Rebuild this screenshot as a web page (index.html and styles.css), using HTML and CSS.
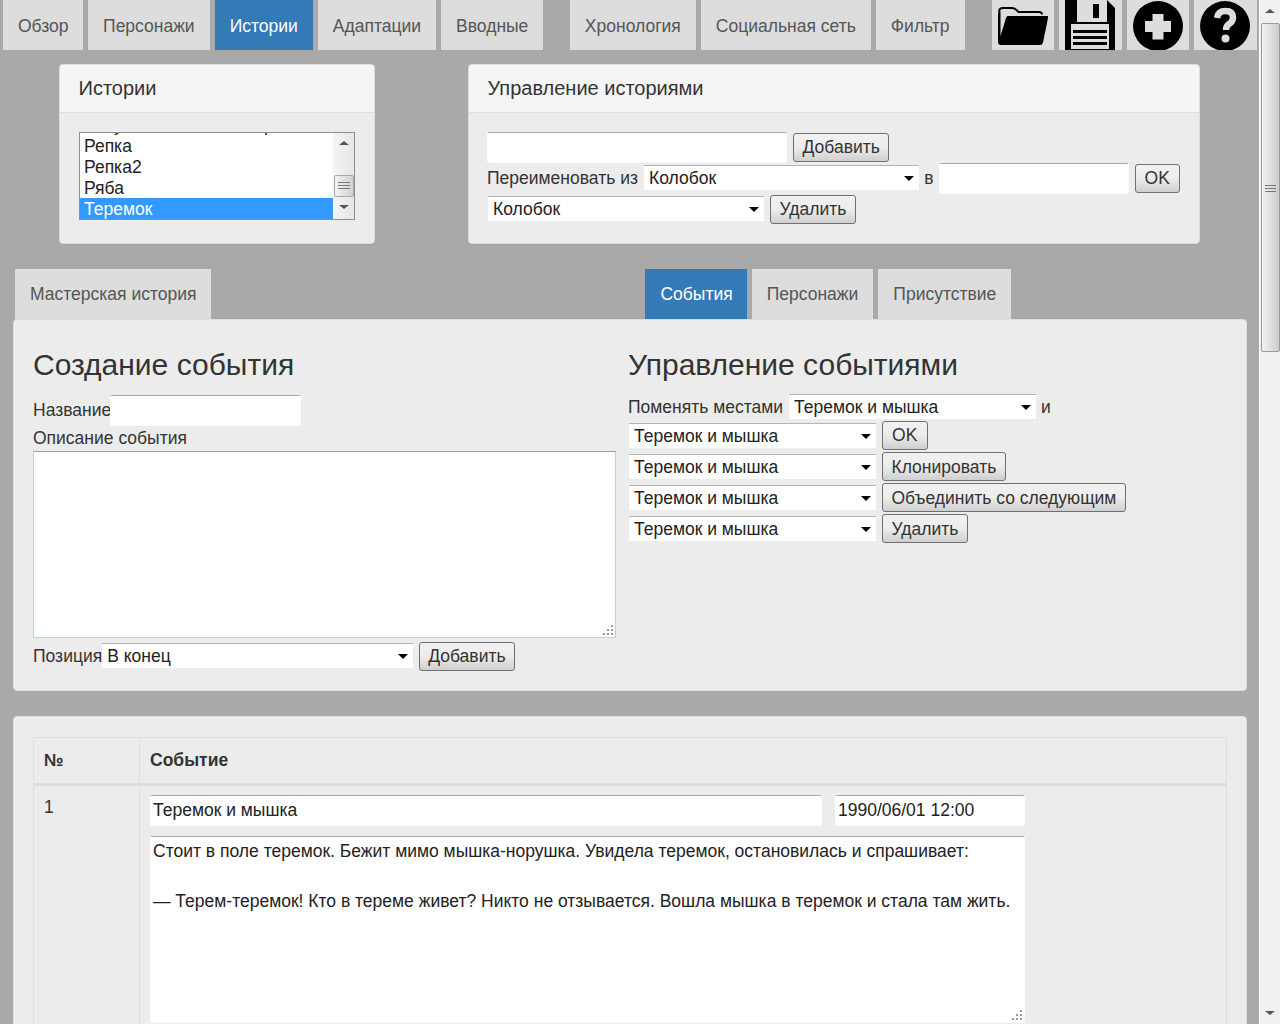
FILE: index.html
```html
<!DOCTYPE html>
<html lang="ru">
<head>
<meta charset="utf-8">
<title>Истории</title>
<link rel="stylesheet" href="styles.css">
</head>
<body>
<div class="page">
  <nav class="nav">
    <div class="tabs">
      <a class="tab tab-slim">Обзор</a><a class="tab">Персонажи</a><a class="tab active">Истории</a><a class="tab">Адаптации</a><a class="tab">Вводные</a>
    </div>
    <div class="tabs">
      <a class="tab">Хронология</a><a class="tab">Социальная сеть</a><a class="tab">Фильтр</a>
    </div>
    <div class="tabs icon-tabs">
      <a class="tab icon-tab">
        <svg width="50" height="50" viewBox="0 0 50 50"><path d="M1 12Q1 8 5 8H14Q17 8 19 10.500L20.500 12H41Q44 12 44 14.500" fill="none" stroke="#000" stroke-width="2"/><path d="M10 16H49.500Q50.500 16 50 18L45 42.500Q44.500 45 42 45H3Q0 45 0 42V13L2.500 11V36L8 18Q8.500 16 10 16Z" fill="#000"/></svg>
      </a>
      <a class="tab icon-tab">
        <svg width="50" height="50" viewBox="0 0 50 50"><path d="M0 0H42L50 8V50H0Z" fill="#000"/><path d="M12 0H42V22H12Z" fill="#ddd"/><path d="M28 4H34V18H28Z" fill="#000"/><path d="M6 24H44V49H6Z" fill="#ddd"/><path d="M8 30H42V33H8ZM8 36H42V39H8ZM8 42H42V45H8Z" fill="#000"/></svg>
      </a>
      <a class="tab icon-tab">
        <svg width="50" height="50" viewBox="0 0 50 50"><circle cx="25" cy="26" r="25" fill="#000"/><path d="M19.500 14H30.500V21H38V32H30.500V39.500H19.500V32H12V21H19.500Z" fill="#ddd"/></svg>
      </a>
      <a class="tab icon-tab">
        <svg width="50" height="50" viewBox="0 0 50 50"><circle cx="25" cy="26" r="25" fill="#000"/><path d="M17 18Q18 11 25.500 11Q33 11 33 17.500Q33 21.500 29 24Q26 26 26 30" fill="none" stroke="#ddd" stroke-width="6.500"/><circle cx="25.500" cy="38.500" r="4" fill="#ddd"/></svg>
      </a>
    </div>
  </nav>

  <section class="top-row">
    <div class="panel panel-list">
      <div class="panel-heading">Истории</div>
      <div class="panel-body">
        <div class="listbox">
          <div class="list-items">
            <div class="list-item">Петушок и бобовое зернышко</div>
            <div class="list-item">Репка</div>
            <div class="list-item">Репка2</div>
            <div class="list-item">Ряба</div>
            <div class="list-item selected">Теремок</div>
          </div>
          <div class="list-scroll">
            <span class="arrow-up"></span>
            <span class="list-thumb"></span>
            <span class="arrow-down"></span>
          </div>
        </div>
      </div>
    </div>
    <div class="panel panel-manage">
      <div class="panel-heading">Управление историями</div>
      <div class="panel-body">
        <div class="line">
          <input class="field w300" type="text">
          <button class="btn">Добавить</button>
        </div>
        <div class="line">
          <span>Переименовать из</span>
          <label class="select w276 raised"><select><option>Колобок</option></select></label>
          <span>в</span>
          <input class="field w190" type="text">
          <button class="btn btn-ok">OK</button>
        </div>
        <div class="line">
          <label class="select w276 raised"><select><option>Колобок</option></select></label>
          <button class="btn">Удалить</button>
        </div>
      </div>
    </div>
  </section>

  <div class="subnav">
    <div class="tabs"><a class="tab">Мастерская история</a></div>
    <div class="tabs">
      <a class="tab active tab-slim">События</a><a class="tab">Персонажи</a><a class="tab">Присутствие</a>
    </div>
  </div>

  <section class="card card-edit">
    <div class="col-left">
      <h3>Создание события</h3>
      <div class="line tight">
        <span class="name-label">Название</span>
        <input class="field w191" type="text">
      </div>
      <div class="desc-label">Описание события</div>
      <textarea class="area area-new"></textarea>
      <div class="line tight pos-line">
        <span>Позиция</span>
        <label class="select w311 raised"><select><option>В конец</option></select></label>
        <button class="btn">Добавить</button>
      </div>
    </div>
    <div class="col-right">
      <h3>Управление событиями</h3>
      <div class="line swap-line">
        <span>Поменять местами</span>
        <label class="select w247 raised"><select><option>Теремок и мышка</option></select></label>
        <span>и</span>
      </div>
      <div class="line">
        <label class="select w247"><select><option>Теремок и мышка</option></select></label>
        <button class="btn btn-ok">OK</button>
      </div>
      <div class="line">
        <label class="select w247"><select><option>Теремок и мышка</option></select></label>
        <button class="btn">Клонировать</button>
      </div>
      <div class="line">
        <label class="select w247"><select><option>Теремок и мышка</option></select></label>
        <button class="btn">Объединить со следующим</button>
      </div>
      <div class="line">
        <label class="select w247"><select><option>Теремок и мышка</option></select></label>
        <button class="btn">Удалить</button>
      </div>
    </div>
  </section>

  <section class="card card-table">
    <table class="events">
      <thead>
        <tr><th class="num">№</th><th>Событие</th></tr>
      </thead>
      <tbody>
        <tr>
          <td class="num">1</td>
          <td class="event-cell">
            <div class="event-head">
              <input class="field w672" type="text" value="Теремок и мышка">
              <input class="field w190" type="text" value="1990/06/01 12:00">
            </div>
            <textarea class="area area-event">Стоит в поле теремок. Бежит мимо мышка-норушка. Увидела теремок, остановилась и спрашивает:

— Терем-теремок! Кто в тереме живет? Никто не отзывается. Вошла мышка в теремок и стала там жить.</textarea>
          </td>
        </tr>
      </tbody>
    </table>
  </section>
</div>

<aside class="scrollbar">
  <span class="arrow-up"></span>
  <span class="thumb"></span>
  <span class="arrow-down"></span>
</aside>
</body>
</html>
```

FILE: styles.css
```css
* { box-sizing: border-box; }
html, body { margin: 0; height: 1024px; overflow: hidden; }
body {
  background: #a9a9a9;
  color: #333;
  font: 17.5px/25px "Liberation Sans", Arial, sans-serif;
}
.page { width: 1259px; height: 1024px; overflow: hidden; }

/* tabs */
.nav { display: flex; gap: 26.5px; padding-left: 3px; height: 50px; }
.tabs { display: flex; gap: 5px; }
.icon-tabs { margin-left: .5px; }
.tab {
  display: block;
  height: 50px;
  padding: 14px 15px 11px;
  background: #ddd;
  color: #555;
  white-space: nowrap;
}
.tab.active { background: #337ab7; color: #fff; }
.tab.tab-slim { padding-right: 14.5px; }
.tab.icon-tab { width: 62.5px; padding: 0 6px; }
.icon-tab svg { display: block; }

/* panels */
.top-row { display: flex; gap: 93px; margin: 14px 0 25px 59px; height: 180px; }
.panel {
  background: #ececec;
  border: 1px solid #ddd;
  border-radius: 4px;
  box-shadow: 0 1px 1px rgba(0, 0, 0, .05);
}
.panel-list { width: 316px; }
.panel-manage { width: 732px; }
.panel-heading {
  height: 48px;
  padding: 11px 18.5px;
  background: #f5f5f5;
  border-bottom: 1px solid #ddd;
  border-radius: 3px 3px 0 0;
  font-size: 20px;
}
.panel-body { padding: 19px; }
.panel-manage .panel-body { padding-left: 18px; }
.panel-manage .select { margin-left: 1px; }

/* list box */
.listbox {
  display: flex;
  width: 276px;
  height: 88px;
  border: 1px solid #8e8e8e;
  background: #fff;
  overflow: hidden;
}
.list-items { flex: 1; margin-top: -19px; min-width: 0; }
.list-item { height: 21px; padding: 0 4px; line-height: 23px; color: #222; white-space: nowrap; overflow: hidden; }
.list-item.selected { background: #3399ff; color: #fff; }
.list-scroll {
  position: relative;
  width: 21px;
  flex: none;
  background: linear-gradient(90deg, #f4f4f4, #e6e6e6);
}
.list-thumb {
  position: absolute;
  left: 1px;
  right: 0;
  top: 42px;
  height: 22px;
  border: 1px solid #a8a8a8;
  border-radius: 2px;
  background: linear-gradient(90deg, #f4f4f4, #d0d0d0);
}
.list-thumb::after, .thumb::after {
  content: "";
  position: absolute;
  left: 3px;
  right: 3px;
  top: 50%;
  height: 9px;
  margin-top: -4px;
  background: repeating-linear-gradient(180deg, #777 0 1px, transparent 1px 3px);
}
.arrow-up, .arrow-down {
  position: absolute;
  left: 50%;
  margin-left: -5px;
  border: 5px solid transparent;
  border-top-width: 0;
  border-bottom-width: 0;
}
.arrow-up { top: 9px; border-bottom: 4px solid #555; }
.arrow-down { bottom: 9px; border-top: 4px solid #555; }
.list-scroll .arrow-up { top: 8px; }
.list-scroll .arrow-down { bottom: 10px; }

/* form lines */
.line { display: flex; align-items: center; gap: 5px; height: 31px; white-space: nowrap; }
.line.tight { gap: 0; }
.name-label { margin-right: -1px; }
.field {
  height: 31px;
  padding: 2px;
  background: #fff;
  border: 1px solid #fbfbfb;
  border-top-color: #a8a8a8;
  border-radius: 2px;
  color: #222;
  font: inherit;
}
.w190 { width: 190px; }
.w191 { width: 191px; }
.w300 { width: 300px; }
.w672 { width: 672px; }
.w247 { width: 247px; }
.w276 { width: 276px; }
.w311 { width: 311px; }
.select { position: relative; display: block; height: 25px; }
.select select {
  display: block;
  width: 100%;
  height: 25px;
  padding: 0 20px 0 5px;
  background: #fff;
  border: 0;
  border-top: 1px solid #b4b4b4;
  border-radius: 0;
  appearance: none;
  color: #222;
  font: inherit;
}
.select.raised { margin-bottom: 2px; }
.select::after {
  content: "";
  position: absolute;
  right: 5px;
  top: 11px;
  border: 5px solid transparent;
  border-top: 5px solid #000;
  border-bottom: 0;
  pointer-events: none;
}
.btn {
  height: 29px;
  margin-left: 1px;
  padding: 0 8.5px;
  background: linear-gradient(180deg, #f1f1f1 0, #ececec 50%, #cfcfcf 100%);
  border: 1px solid #707070;
  border-radius: 3px;
  color: #333;
  font: inherit;
  line-height: 25px;
}
.btn-ok { min-width: 45.5px; }
.col-right .btn:not(.btn-ok) { padding-top: 2px; }

/* second tabs */
.subnav { display: flex; gap: 434px; padding-left: 15px; height: 50px; }
.subnav .tab { padding-top: 13px; padding-bottom: 12px; }
.subnav .tab.tab-slim { padding-right: 14px; }

/* cards */
.card {
  margin-left: 13px;
  width: 1234px;
  background: #ececec;
  border: 1px solid #ddd;
  border-radius: 4px;
}
.card-edit { display: flex; gap: 13px; height: 372px; padding: 20px 19px; }
.col-left { width: 582px; flex: none; }
.col-right { flex: 1; }
.col-right .line > .select:first-child, .swap-line .select { margin-left: 1px; }
h3 {
  margin: 8px 0 14px;
  font-size: 30px;
  font-weight: 400;
  line-height: 33px;
  white-space: nowrap;
}
.desc-label { height: 25px; line-height: 24px; }
.area {
  display: block;
  padding: 2px;
  background: #fff;
  font: inherit;
  color: #222;
  outline: 0;
}
.area::-webkit-resizer {
  background:
    linear-gradient(#999, #999) 11px 11px / 2px 2px no-repeat,
    linear-gradient(#999, #999) 7px 11px / 2px 2px no-repeat,
    linear-gradient(#999, #999) 3px 11px / 2px 2px no-repeat,
    linear-gradient(#999, #999) 11px 7px / 2px 2px no-repeat,
    linear-gradient(#999, #999) 7px 7px / 2px 2px no-repeat,
    linear-gradient(#999, #999) 11px 3px / 2px 2px no-repeat;
}
.area-new {
  width: 583px;
  height: 187px;
  border: 1px solid #bcd2e4;
  border-top-color: #7ea6c4;
}
.pos-line { margin-top: 3px; }
.pos-line .btn { margin-left: 6px; padding: 0 8px; }
.swap-line { height: 25px; }

.card-table { margin-top: 25px; padding: 20px 19px; height: 400px; }
.events { width: 1194px; border-collapse: collapse; table-layout: fixed; }
.events th, .events td { border: 1px solid #ddd; padding: 10px; text-align: left; vertical-align: top; }
.events th { height: 46px; line-height: 25px; border-bottom-width: 3px; }
.events .num { width: 106px; }
.events td.num { line-height: 22px; }
.events td.event-cell { padding: 9px 9px 10px 10px; }
.event-head { display: flex; gap: 13px; margin-bottom: 10px; }
.area-event {
  width: 875px;
  height: 187px;
  border: 1px solid #fbfbfb;
  border-top-color: #a8a8a8;
  border-radius: 2px;
}

/* window scrollbar */
.scrollbar {
  position: fixed;
  top: 0;
  right: 0;
  bottom: 0;
  width: 21px;
  background: #f0f0f0;
  border-left: 1px solid #fdfdfd;
}
.thumb {
  position: absolute;
  top: 23px;
  left: 1px;
  right: 0;
  height: 329px;
  background: linear-gradient(90deg, #f2f2f2, #cdcdcd);
  border: 1px solid #9a9a9a;
  border-radius: 2px;
}
.thumb::after { top: 165px; }
```
